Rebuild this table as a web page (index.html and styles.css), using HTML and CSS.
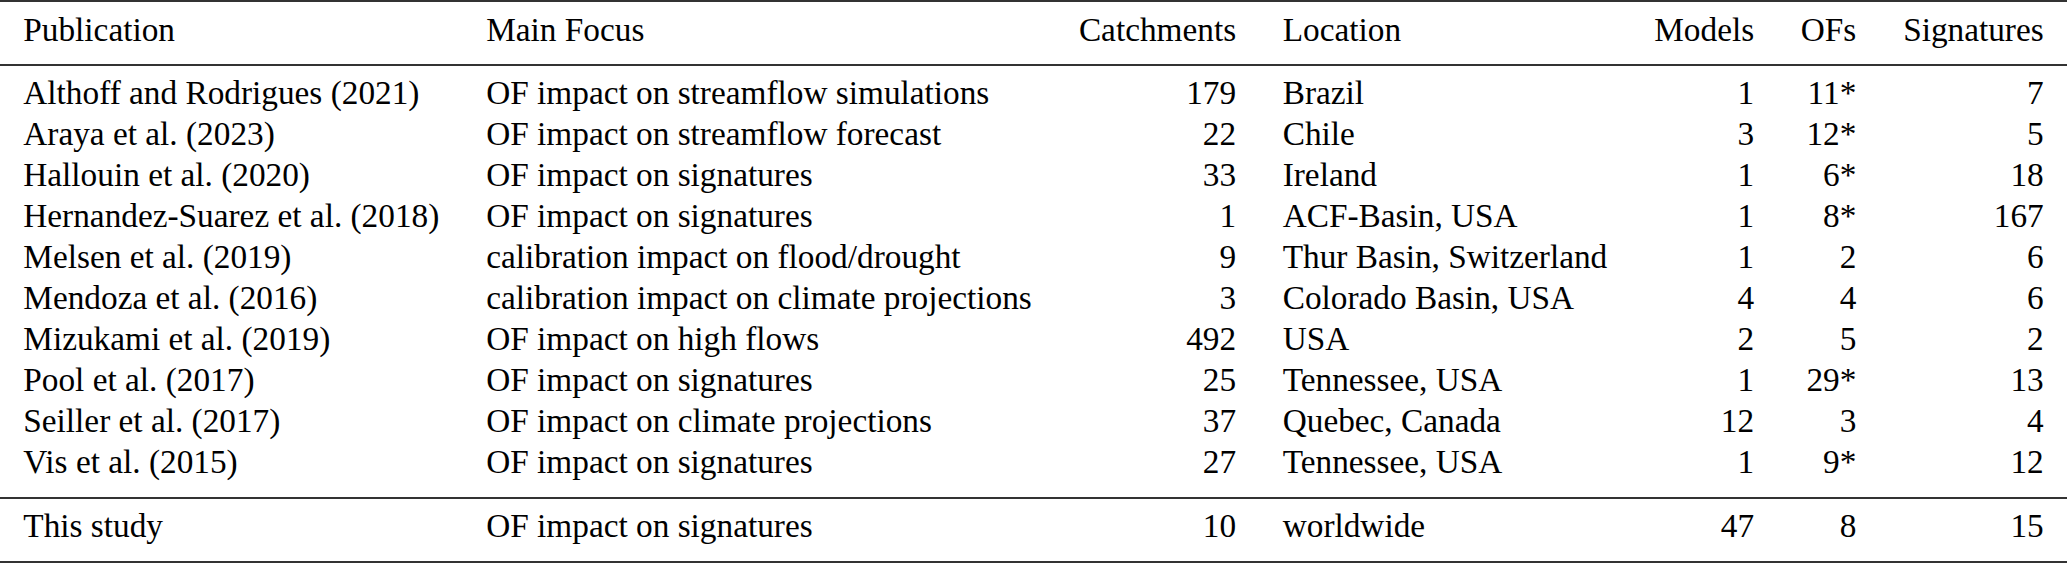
FILE: index.html
```html
<!DOCTYPE html>
<html lang="en">
<head>
<meta charset="utf-8">
<title>Table</title>
<link rel="stylesheet" href="styles.css">
</head>
<body>
<table class="tbl">
  <thead>
    <tr>
      <th class="l">Publication</th>
      <th class="l">Main Focus</th>
      <th class="r">Catchments</th>
      <th class="l">Location</th>
      <th class="r">Models</th>
      <th class="r">OFs</th>
      <th class="r">Signatures</th>
    </tr>
  </thead>
  <tbody class="main">
    <tr><td class="l">Althoff and Rodrigues (2021)</td><td class="l">OF impact on streamflow simulations</td><td class="r">179</td><td class="l">Brazil</td><td class="r">1</td><td class="r">11*</td><td class="r">7</td></tr>
    <tr><td class="l">Araya et al. (2023)</td><td class="l">OF impact on streamflow forecast</td><td class="r">22</td><td class="l">Chile</td><td class="r">3</td><td class="r">12*</td><td class="r">5</td></tr>
    <tr><td class="l">Hallouin et al. (2020)</td><td class="l">OF impact on signatures</td><td class="r">33</td><td class="l">Ireland</td><td class="r">1</td><td class="r">6*</td><td class="r">18</td></tr>
    <tr><td class="l">Hernandez-Suarez et al. (2018)</td><td class="l">OF impact on signatures</td><td class="r">1</td><td class="l">ACF-Basin, USA</td><td class="r">1</td><td class="r">8*</td><td class="r">167</td></tr>
    <tr><td class="l">Melsen et al. (2019)</td><td class="l">calibration impact on flood/drought</td><td class="r">9</td><td class="l">Thur Basin, Switzerland</td><td class="r">1</td><td class="r">2</td><td class="r">6</td></tr>
    <tr><td class="l">Mendoza et al. (2016)</td><td class="l">calibration impact on climate projections</td><td class="r">3</td><td class="l">Colorado Basin, USA</td><td class="r">4</td><td class="r">4</td><td class="r">6</td></tr>
    <tr><td class="l">Mizukami et al. (2019)</td><td class="l">OF impact on high flows</td><td class="r">492</td><td class="l">USA</td><td class="r">2</td><td class="r">5</td><td class="r">2</td></tr>
    <tr><td class="l">Pool et al. (2017)</td><td class="l">OF impact on signatures</td><td class="r">25</td><td class="l">Tennessee, USA</td><td class="r">1</td><td class="r">29*</td><td class="r">13</td></tr>
    <tr><td class="l">Seiller et al. (2017)</td><td class="l">OF impact on climate projections</td><td class="r">37</td><td class="l">Quebec, Canada</td><td class="r">12</td><td class="r">3</td><td class="r">4</td></tr>
    <tr><td class="l">Vis et al. (2015)</td><td class="l">OF impact on signatures</td><td class="r">27</td><td class="l">Tennessee, USA</td><td class="r">1</td><td class="r">9*</td><td class="r">12</td></tr>
  </tbody>
  <tbody class="study">
    <tr><td class="l">This study</td><td class="l">OF impact on signatures</td><td class="r">10</td><td class="l">worldwide</td><td class="r">47</td><td class="r">8</td><td class="r">15</td></tr>
  </tbody>
</table>
</body>
</html>
```
FILE: styles.css
```css
html, body {
  margin: 0;
  padding: 0;
  background: #ffffff;
}

.tbl {
  border-collapse: separate;
  border-spacing: 0;
  width: 100%;
  font-family: "Liberation Serif", "Times New Roman", Tinos, "Nimbus Roman", "DejaVu Serif", serif;
  font-size: 33.3px;
  line-height: 41px;
  color: #000000;
}

.tbl th,
.tbl td {
  font-family: "Liberation Serif", "Times New Roman", Tinos, "Nimbus Roman", "DejaVu Serif", serif;
  padding: 0 23.3px;
  white-space: nowrap;
  font-weight: normal;
  vertical-align: baseline;
}

.tbl .l { text-align: left; }
.tbl .r { text-align: right; }

.tbl thead th {
  border-top: 2px solid #333333;
  border-bottom: 2px solid #333333;
  padding-top: 7px;
  padding-bottom: 14px;
}

.tbl tbody tr:first-child td {
  padding-top: 6px;
}

.tbl tbody tr:last-child td {
  padding-bottom: 15px;
  border-bottom: 2px solid #333333;
}
```
